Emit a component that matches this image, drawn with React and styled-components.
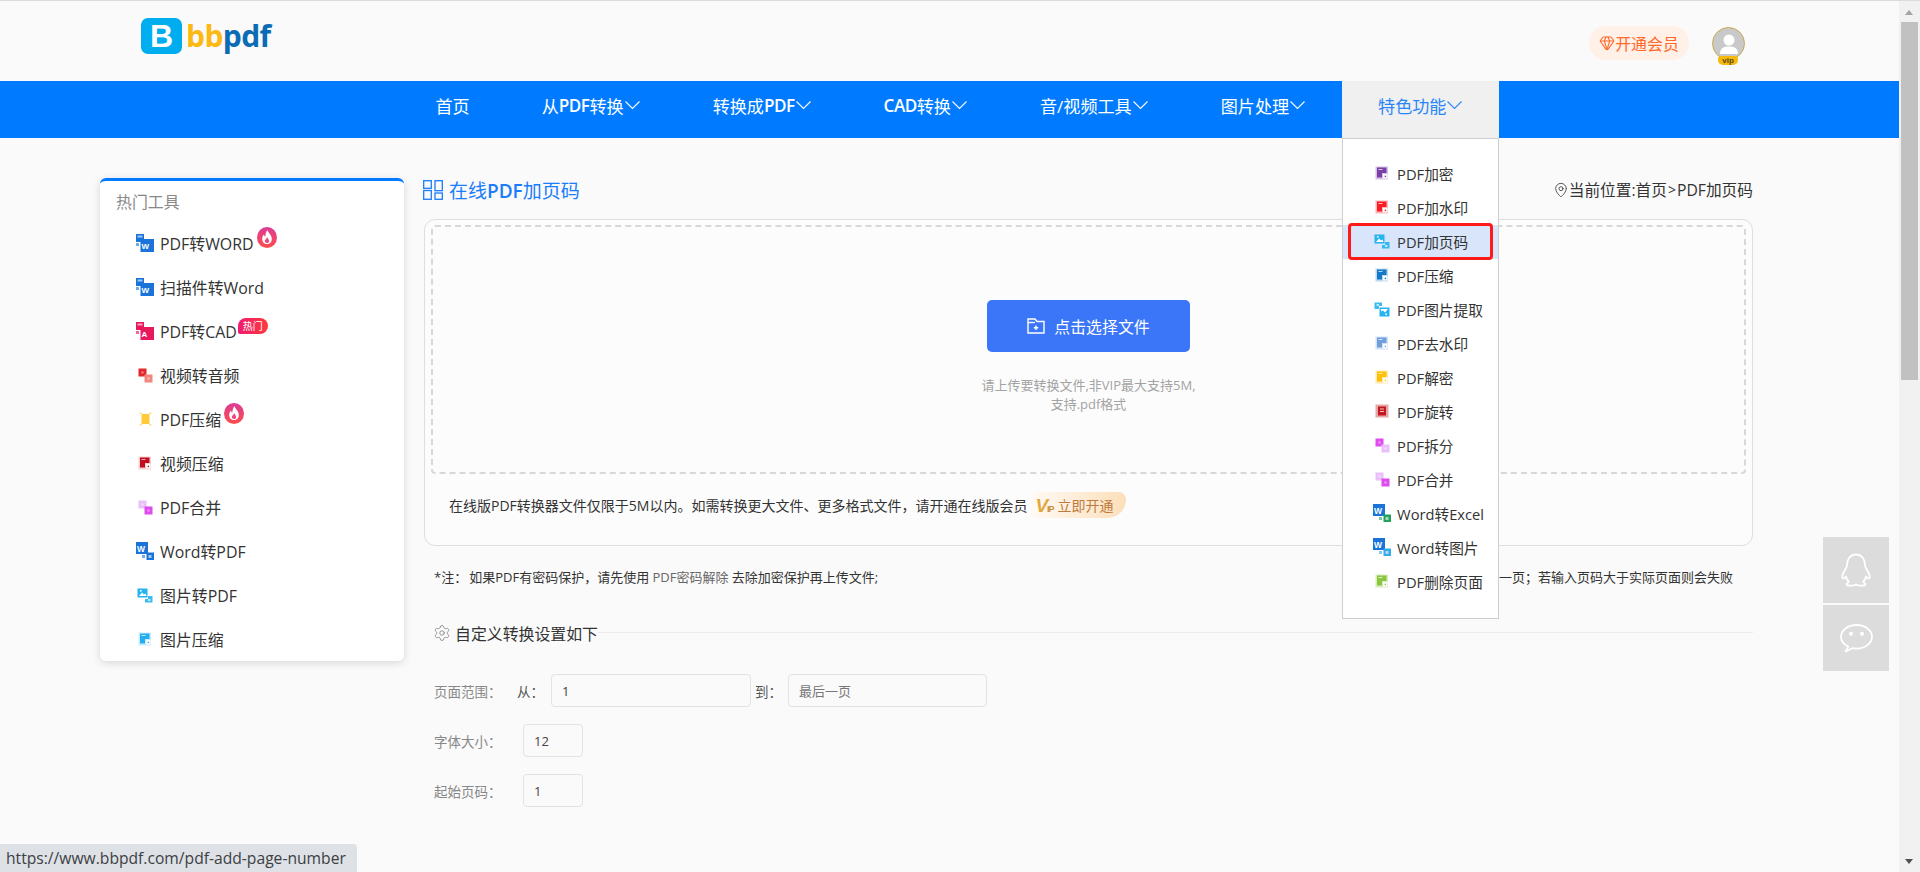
import React from "react";
import styled, { createGlobalStyle } from "styled-components";
import { Gem, MapPin, Settings } from "lucide-react";

const Global = createGlobalStyle`
  html, body { margin: 0; padding: 0; height: 100%; overflow: hidden; background: #fafafa; }
  * { box-sizing: border-box; }
  body { font-family: "Open Sans", "Noto Sans CJK SC", sans-serif; color: #333; }
`;

const Shell = styled.div`
  display: flex;
  width: 1920px;
  height: 872px;
  position: relative;
  overflow: hidden;
  border-top: 1px solid #dcdcdc;
`;
const Page = styled.div`
  flex: 1;
  min-width: 0;
  background: #fafafa;
`;
const Header = styled.header`
  height: 80px;
  display: flex;
  align-items: flex-start;
  justify-content: space-between;
  padding: 17px 154px 0 141px;
`;
const Logo = styled.div`
  display: flex;
  align-items: center;
  gap: 4px;
  height: 36px;
`;
const LogoMark = styled.div`
  width: 41px;
  height: 36px;
  border-radius: 7px;
  background: #00aeef;
  color: #fff;
  display: flex;
  align-items: center;
  justify-content: center;
  font: 700 32px/36px "Liberation Sans", sans-serif;
`;
const LogoWord = styled.div`
  font: 700 30px/36px "Open Sans", sans-serif;
  letter-spacing: -0.6px;
  color: #0b6cb5;
  span { color: #fdb913; }
`;
const HeaderRight = styled.div`
  display: flex;
  align-items: flex-start;
  gap: 23px;
  padding-top: 8px;
`;
const VipPill = styled.div`
  width: 100px;
  height: 34px;
  border-radius: 17px;
  background: #fff0e8;
  color: #ff6a2b;
  font-size: 15.9px;
  display: flex;
  align-items: center;
  justify-content: center;
  svg { flex: none; }
`;
const Avatar = styled.div`
  width: 33px;
  height: 33px;
  border-radius: 50%;
  background: #c9c9c9;
  border: 1.5px solid #c8aa52;
  position: relative;
  margin-top: 1px;
  display: flex;
  align-items: center;
  justify-content: center;
`;
const AvatarBadge = styled.span`
  position: absolute;
  left: 5px;
  top: 28px;
  width: 20px;
  height: 9px;
  border-radius: 3px 3px 5px 5px;
  background: #f6b90d;
  color: #5a4610;
  font: 700 8px/9px "Liberation Sans", sans-serif;
  text-align: center;
`;
const Nav = styled.nav`
  height: 57px;
  background: #007bff;
  display: flex;
  justify-content: center;
`;
const NavItem = styled.div`
  position: relative;
  padding: 0 36px 9px;
  display: flex;
  align-items: center;
  font-size: 17.1px;
  color: ${(p) => (p.$active ? "#2a86f8" : "#fff")};
  background: ${(p) => (p.$active ? "#f0f0f0" : "transparent")};
  b { font-weight: 600; letter-spacing: -0.5px; }
`;
const Menu = styled.div`
  position: absolute;
  left: 0;
  top: 100%;
  width: 157px;
  height: 481px;
  background: #fff;
  border: 1px solid #cfcfcf;
  padding-top: 18px;
  z-index: 5;
`;
const MenuRow = styled.div`
  height: 34px;
  padding-bottom: 2px;
  display: flex;
  align-items: center;
  font-size: 14.7px;
  color: #333;
  background: ${(p) => (p.$selected ? "#d8e5fb" : "transparent")};
  position: relative;
`;
const IconSlot = styled.span`
  width: ${(p) => p.$w}px;
  margin-left: ${(p) => p.$ml}px;
  margin-right: ${(p) => p.$mr}px;
  flex: none;
  display: flex;
  align-items: center;
  justify-content: center;
`;
const Callout = styled.span`
  position: absolute;
  left: 5px;
  right: 5px;
  top: -2px;
  bottom: -1px;
  border: 3px solid #ff1a1a;
  border-radius: 4px;
  pointer-events: none;
`;
const Main = styled.main`
  display: flex;
  align-items: flex-start;
  gap: 20px;
  padding: 40px 146px 0 100px;
`;
const Sidebar = styled.aside`
  width: 304px;
  height: 483px;
  flex: none;
  background: #fff;
  border-top: 3px solid #007bff;
  border-radius: 6px;
  box-shadow: 0 2px 8px rgba(0, 0, 0, 0.14);
  padding: 9px 0 0;
`;
const SideHead = styled.div`
  padding-left: 16px;
  font-size: 15.9px;
  line-height: 24px;
  color: #888;
  margin-bottom: 7px;
`;
const SideRow = styled.div`
  height: 44px;
  display: flex;
  align-items: center;
  font-size: 15.9px;
  color: #333;
`;
const Fire = styled.span`
  align-self: flex-start;
  margin-top: 6px;
  margin-left: 3px;
  display: flex;
`;
const HotTag = styled.span`
  align-self: flex-start;
  margin-top: 9px;
  margin-left: 1px;
  width: 30px;
  height: 16px;
  border-radius: 8px 8px 8px 2px;
  background: linear-gradient(90deg, #ee1c72, #ff3a3a);
  color: #fff;
  font-size: 10px;
  line-height: 16px;
  text-align: center;
`;
const Content = styled.section`
  flex: 1;
  min-width: 0;
`;
const TitleRow = styled.div`
  height: 25px;
  padding-bottom: 2px;
  display: flex;
  align-items: center;
  justify-content: space-between;
  margin-bottom: 16px;
`;
const Title = styled.h1`
  margin: 0;
  display: flex;
  align-items: center;
  gap: 6px;
  margin-left: -1px;
  font-size: 19px;
  font-weight: 400;
  color: #1a7dfb;
  b { font-weight: 600; }
`;
const Crumb = styled.div`
  display: flex;
  align-items: center;
  font-size: 15.7px;
  color: #333;
  i { font-style: normal; margin: 0 1px; font-size: 14px; }
`;
const Card = styled.div`
  height: 327px;
  background: #fcfcfc;
  border: 1px solid #dedede;
  border-radius: 11px;
  padding: 5px 6px 0;
`;
const Drop = styled.div`
  height: 249px;
  border: 2px dashed #d8d8d8;
  border-radius: 4px;
  padding-top: 73px;
  display: flex;
  flex-direction: column;
  align-items: center;
`;
const PickButton = styled.div`
  width: 203px;
  height: 52px;
  background: #3a76f7;
  border-radius: 5px;
  color: #fff;
  font-size: 15.9px;
  display: flex;
  align-items: center;
  justify-content: center;
  gap: 9px;
`;
const Hint = styled.p`
  margin: 24px 0 0;
  text-align: center;
  font-size: 13px;
  line-height: 19px;
  color: #a3a3a3;
`;
const Limit = styled.div`
  display: flex;
  align-items: center;
  height: 26px;
  margin-top: 18px;
  padding-left: 18px;
  font-size: 14px;
  color: #333;
`;
const OpenVip = styled.span`
  margin-left: 4px;
  width: 95px;
  height: 26px;
  display: flex;
  align-items: center;
  padding-left: 4px;
  border-radius: 0 8px 20px 0;
  background: linear-gradient(90deg, #fffaf5, #fddfb9);
  color: #bd7a3c;
  font-size: 14px;
`;
const VipMark = styled.span`
  width: 22px;
  flex: none;
  font: italic 700 19px/1 "Liberation Sans", sans-serif;
  color: #dfa840;
  letter-spacing: -1px;
  small { font-size: 9px; font-style: normal; color: #c98f33; }
`;
const Notes = styled.div`
  display: flex;
  justify-content: space-between;
  margin-top: 22px;
  padding: 0 20px 0 10px;
  font-size: 13px;
  line-height: 18px;
  color: #333;
  em { font-style: normal; color: #666; }
`;
const NoteLead = styled.span`
  margin-right: 2px;
`;
const SectionHead = styled.div`
  display: flex;
  align-items: center;
  gap: 4px;
  margin-top: 34px;
  padding-left: 9px;
  height: 26px;
  font-size: 15.9px;
  color: #333;
`;
const Rule = styled.i`
  flex: 1;
  height: 1px;
  background: #ececec;
  margin: -1px 0 0 -4px;
`;
const Form = styled.div`
  padding: 28px 0 0 10px;
`;
const FormRow = styled.div`
  height: 33px;
  display: flex;
  align-items: center;
  margin-bottom: 17px;
`;
const Label = styled.label`
  width: ${(p) => p.$w}px;
  flex: none;
  padding-left: ${(p) => p.$pl || 0}px;
  font-size: 13.5px;
  color: ${(p) => (p.$dark ? "#555" : "#888")};
`;
const Field = styled.input`
  width: ${(p) => p.$w}px;
  height: 33px;
  flex: none;
  border: 1px solid #e3e3e3;
  border-radius: 4px;
  background: #fafafa;
  padding: 0 10px;
  outline: none;
  font-family: inherit;
  font-size: 13px;
  color: #444;
  &::placeholder { color: #777; opacity: 1; }
`;
const SideDock = styled.div`
  position: absolute;
  left: 1823px;
  top: 536px;
  display: flex;
  flex-direction: column;
  gap: 2px;
  z-index: 6;
`;
const DockBtn = styled.div`
  width: 66px;
  height: 66px;
  background: #dcdcdc;
  display: flex;
  align-items: center;
  justify-content: center;
`;
const Status = styled.div`
  position: absolute;
  left: 0;
  bottom: 0;
  height: 28px;
  width: 357px;
  background: #dee1e6;
  border-radius: 0 4px 0 0;
  padding-left: 6px;
  font: 15.65px/28px "Open Sans", sans-serif;
  color: #3c4043;
  white-space: nowrap;
  z-index: 7;
`;
const Scrollbar = styled.aside`
  width: 21px;
  flex: none;
  background: #f1f1f1;
  position: relative;
  padding-top: 21px;
  display: flex;
  justify-content: center;
`;
const Thumb = styled.div`
  width: 17px;
  height: 358px;
  background: #c1c1c1;
`;
const Arrow = styled.span`
  position: absolute;
  left: 6px;
  ${(p) => (p.$up ? "top: 9px;" : "bottom: 8px;")}
  width: 0;
  height: 0;
  border-left: 4.5px solid transparent;
  border-right: 4.5px solid transparent;
  ${(p) => (p.$up ? "border-bottom: 5px solid #a3a3a3;" : "border-top: 5px solid #505050;")}
`;

const Chevron = ({ color = "#fff" }) => (
  <svg width="17" height="10" viewBox="0 0 17 10" fill="none" stroke={color} strokeWidth="1.1">
    <path d="M1.5 1.5 L8.5 8.5 L15.5 1.5" />
  </svg>
);

/* small document-style tool icons */
const Doc = ({ dark, light }) => (
  <svg width="14" height="14" viewBox="0 0 14 14">
    <rect x="0.5" y="0.5" width="12.5" height="13" fill={light} />
    <path d="M2 1.5 H11.5 V7 H7 V11.5 H2 Z" fill={dark} />
    <rect x="3.5" y="3" width="4" height="1" fill="#fff" opacity=".7" />
    <rect x="8" y="8" width="4.5" height="4.5" fill="#fff" />
    <rect x="9.7" y="9.7" width="1.4" height="1.4" fill={dark} />
  </svg>
);
const Pair = ({ first, second }) => (
  <svg width="15" height="15" viewBox="0 0 15 15">
    <rect x="0.5" y="0.5" width="8" height="8" fill={first} />
    <rect x="6.5" y="6.5" width="8" height="8" fill={second} />
    <rect x="3.5" y="3.5" width="2" height="2" fill="#fff" opacity=".5" />
    <rect x="9.5" y="9.5" width="2" height="2" fill="#fff" opacity=".5" />
  </svg>
);
const Pics = ({ color, flip }) => (
  <svg width="16" height="15" viewBox="0 0 16 15" style={flip ? { transform: "rotate(180deg)" } : undefined}>
    <rect x="0.5" y="0.5" width="10" height="9" fill={color} />
    <path d="M2 8 L5 4.5 L7 6.5 L8.5 5.5 L9.5 8 Z" fill="#fff" />
    <rect x="3" y="2" width="1.6" height="1.6" fill="#fff" />
    <path d="M11 8 H15.5 V14.5 H8 V11 H11 Z" fill={color} opacity=".9" />
    <rect x="11" y="11" width="2.4" height="2" fill="#fff" opacity=".7" />
  </svg>
);
const Compress = () => (
  <svg width="13" height="14" viewBox="0 0 13 14">
    <path d="M2.5 2 H10.5 V12 H2.5 Z" fill="#ffc93c" />
    <path d="M0.5 0.5 H3 V2 H0.5 Z M10 0.5 H12.5 V2 H10 Z M0.5 12 H3 V13.5 H0.5 Z M10 12 H12.5 V13.5 H10 Z" fill="#ffe08a" />
  </svg>
);
const Rotate = () => (
  <svg width="14" height="14" viewBox="0 0 14 14">
    <rect x="0.5" y="0.5" width="13" height="13" fill="#e5a6a6" />
    <rect x="3" y="2.5" width="8" height="9" fill="#c3181f" />
    <rect x="5" y="4.5" width="4" height="1" fill="#f0c4c4" />
    <rect x="5" y="7" width="4" height="1" fill="#f0c4c4" />
  </svg>
);
const WordStack = ({ color = "#1a73d9", back = "#6fa9ea", big, tail }) =>
  big ? (
    <svg width="18" height="18" viewBox="0 0 18 18">
      <rect x="0" y="0" width="12" height="12" fill={color} />
      <text x="1" y="9.5" fontSize="8.5" fontWeight="700" fill="#fff" fontFamily="Liberation Sans">W</text>
      <rect x="10.5" y="10.5" width="7.5" height="7.5" fill={tail} />
      <rect x="6" y="13" width="3" height="3" fill={tail} opacity=".6" />
      <rect x="12.5" y="13" width="3" height="3" fill="#fff" opacity=".6" />
    </svg>
  ) : (
    <svg width="18" height="18" viewBox="0 0 18 18">
      <rect x="0" y="0" width="8" height="8" fill={color} />
      <rect x="1.5" y="1.5" width="5" height="2" fill="#fff" opacity=".6" />
      <rect x="0" y="9" width="3" height="3" fill={back === "cad" ? "#f06a95" : back} />
      <rect x="4.5" y="5" width="13.5" height="13" fill={color} />
      <text x="5.6" y="14.5" fontSize="8" fontWeight="700" fill="#fff" fontFamily="Liberation Sans">
        {back === "cad" ? "A" : "W"}
      </text>
    </svg>
  );
const FireBadge = ({ id }) => (
  <svg width="20" height="21" viewBox="0 0 20 21">
    <defs>
      <linearGradient id={id} x1="0" y1="0" x2="0" y2="1">
        <stop offset="0" stopColor="#dd3a96" />
        <stop offset="1" stopColor="#ff4d4d" />
      </linearGradient>
    </defs>
    <ellipse cx="10" cy="10.5" rx="10" ry="10.5" fill={`url(#${id})`} />
    <path
      d="M10.5 3 C11 6 14.8 7.6 14.8 12 C14.8 15 12.8 17 10 17 C7.2 17 5.2 15 5.2 12 C5.2 10 6 8.6 7 7.6 C7.2 9 7.8 9.6 8.4 9.8 C8.3 7.4 9 5 10.5 3 Z"
      fill="#fff"
    />
    <path d="M10.2 10 C10.6 11.6 12.2 12.4 12.2 14 C12.2 15.4 11.2 16 10 16 C8.8 16 7.8 15.3 7.8 14 C7.8 12.6 9.6 12 10.2 10 Z" fill="#f0487a" />
  </svg>
);

const sideTools = [
  { label: "PDF转WORD", icon: <WordStack />, mark: "fire" },
  { label: "扫描件转Word", icon: <WordStack /> },
  { label: "PDF转CAD", icon: <WordStack color="#e8185f" back="cad" />, mark: "hot" },
  { label: "视频转音频", icon: <Pair first="#e2282e" second="#f2877f" /> },
  { label: "PDF压缩", icon: <Compress />, mark: "fire" },
  { label: "视频压缩", icon: <Doc dark="#c20d1f" light="#f5cfd2" /> },
  { label: "PDF合并", icon: <Pair first="#eac0fb" second="#e04bf0" /> },
  { label: "Word转PDF", icon: <WordStack big tail="#1a73d9" /> },
  { label: "图片转PDF", icon: <Pics color="#25b4f0" /> },
  { label: "图片压缩", icon: <Doc dark="#22aef0" light="#c9ecfb" /> },
];

const menuTools = [
  { label: "PDF加密", icon: <Doc dark="#7b3fa8" light="#d6c3e5" /> },
  { label: "PDF加水印", icon: <Doc dark="#fb1b24" light="#fbb7ba" /> },
  { label: "PDF加页码", icon: <Pics color="#25b4f0" />, selected: true },
  { label: "PDF压缩", icon: <Doc dark="#1478c8" light="#bcd9f1" /> },
  { label: "PDF图片提取", icon: <Pics color="#25b4f0" flip /> },
  { label: "PDF去水印", icon: <Doc dark="#6f9fdc" light="#d3e2f5" /> },
  { label: "PDF解密", icon: <Doc dark="#ffc107" light="#ffeab0" /> },
  { label: "PDF旋转", icon: <Rotate /> },
  { label: "PDF拆分", icon: <Pair first="#e04bf0" second="#eac0fb" /> },
  { label: "PDF合并", icon: <Pair first="#eac0fb" second="#e04bf0" /> },
  { label: "Word转Excel", icon: <WordStack big tail="#22a35a" /> },
  { label: "Word转图片", icon: <WordStack big tail="#35a9ea" /> },
  { label: "PDF删除页面", icon: <Doc dark="#8cc63f" light="#d9edbd" /> },
];

const navItems = [
  ["首页"],
  ["从", "PDF", "转换"],
  ["转换成", "PDF", ""],
  ["", "CAD", "转换"],
  ["音/视频工具"],
  ["图片处理"],
];

export default function App() {
  return (
    <>
      <Global />
      <Shell>
        <Page>
          <Header>
            <Logo>
              <LogoMark>B</LogoMark>
              <LogoWord>
                <span>bb</span>pdf
              </LogoWord>
            </Logo>
            <HeaderRight>
              <VipPill>
                <Gem size={16} strokeWidth={1.6} />
                开通会员
              </VipPill>
              <Avatar>
                <svg width="22" height="24" viewBox="0 0 22 24" fill="#fff">
                  <circle cx="11" cy="8" r="5.5" />
                  <path d="M2 22 C2 16 6 14.5 11 14.5 C16 14.5 20 16 20 22 Z" />
                </svg>
                <AvatarBadge>vip</AvatarBadge>
              </Avatar>
            </HeaderRight>
          </Header>
          <Nav>
            {navItems.map((n, i) => (
              <NavItem key={i}>
                {n.length === 1 ? (
                  n[0]
                ) : (
                  <>
                    {n[0]}
                    <b>{n[1]}</b>
                    {n[2]}
                  </>
                )}
                {i > 0 && <Chevron />}
              </NavItem>
            ))}
            <NavItem $active>
              特色功能
              <Chevron color="#2a86f8" />
              <Menu>
                {menuTools.map((t) => (
                  <MenuRow key={t.label} $selected={t.selected}>
                    <IconSlot $w={18} $ml={30} $mr={6}>
                      {t.icon}
                    </IconSlot>
                    {t.label}
                    {t.selected && <Callout />}
                  </MenuRow>
                ))}
              </Menu>
            </NavItem>
          </Nav>
          <Main>
            <Sidebar>
              <SideHead>热门工具</SideHead>
              {sideTools.map((t) => (
                <SideRow key={t.label}>
                  <IconSlot $w={18} $ml={36} $mr={6}>
                    {t.icon}
                  </IconSlot>
                  {t.label}
                  {t.mark === "fire" && (
                    <Fire>
                      <FireBadge id={`fire-${t.label}`} />
                    </Fire>
                  )}
                  {t.mark === "hot" && <HotTag>热门</HotTag>}
                </SideRow>
              ))}
            </Sidebar>
            <Content>
              <TitleRow>
                <Title>
                  <svg width="20" height="20" viewBox="0 0 20 20" fill="none" stroke="#1a7dfb" strokeWidth="1.3">
                    <rect x="0.7" y="0.7" width="7.6" height="7.6" />
                    <rect x="12" y="0.7" width="7.3" height="10" />
                    <rect x="0.7" y="10.5" width="7.6" height="8.8" />
                    <rect x="12" y="13" width="7.3" height="6.3" />
                  </svg>
                  <span>
                    在线<b>PDF</b>加页码
                  </span>
                </Title>
                <Crumb>
                  <MapPin size={16} strokeWidth={1.2} />
                  当前位置:首页<i>&gt;</i>PDF加页码
                </Crumb>
              </TitleRow>
              <Card>
                <Drop>
                  <PickButton>
                    <svg width="18" height="16" viewBox="0 0 18 16" fill="none" stroke="#fff" strokeWidth="1.4">
                      <path d="M1 1 H8 L10 3.5 H17 V15 H1 Z" />
                      <path d="M1 4.5 H8" />
                      <path d="M9 7.5 V12 M6.8 9.8 H11.2" />
                    </svg>
                    点击选择文件
                  </PickButton>
                  <Hint>
                    请上传要转换文件,非VIP最大支持5M,
                    <br />
                    支持.pdf格式
                  </Hint>
                </Drop>
                <Limit>
                  在线版PDF转换器文件仅限于5M以内。如需转换更大文件、更多格式文件，请开通在线版会员
                  <OpenVip>
                    <VipMark>
                      V<small>IP</small>
                    </VipMark>
                    立即开通
                  </OpenVip>
                </Limit>
              </Card>
              <Notes>
                <span>
                  <NoteLead>*注：</NoteLead>如果PDF有密码保护，请先使用 <em>PDF密码解除</em> 去除加密保护再上传文件;
                </span>
                <span>一页；若输入页码大于实际页面则会失败</span>
              </Notes>
              <SectionHead>
                <Settings size={18} strokeWidth={1} color="#777" />
                自定义转换设置如下
                <Rule />
              </SectionHead>
              <Form>
                <FormRow>
                  <Label $w={83}>页面范围：</Label>
                  <Label $w={34} $dark>
                    从：
                  </Label>
                  <Field $w={200} defaultValue="1" />
                  <Label $w={37} $pl={4} $dark>
                    到：
                  </Label>
                  <Field $w={199} placeholder="最后一页" />
                </FormRow>
                <FormRow>
                  <Label $w={89}>字体大小：</Label>
                  <Field $w={60} defaultValue="12" />
                </FormRow>
                <FormRow>
                  <Label $w={89}>起始页码：</Label>
                  <Field $w={60} defaultValue="1" />
                </FormRow>
              </Form>
            </Content>
          </Main>
        </Page>
        <Scrollbar>
          <Arrow $up />
          <Thumb />
          <Arrow />
        </Scrollbar>
        <SideDock>
          <DockBtn>
            <svg width="32" height="34" viewBox="0 0 32 34" fill="none" stroke="#fff" strokeWidth="1.8" strokeLinejoin="round">
              <path d="M16 1.5 C10 1.5 7 6.5 7 12 C7 14 6 15 5 17 C3 20 1.7 23 2.7 25 C3.7 26 5 25 6 23.5 C6.5 26 8 28 9 29 C7 30 6 31 7 32 C8 33 14 33 16 31.5 C18 33 24 33 25 32 C26 31 25 30 23 29 C24 28 25.5 26 26 23.5 C27 25 28.3 26 29.3 25 C30.3 23 29 20 27 17 C26 15 25 14 25 12 C25 6.5 22 1.5 16 1.5 Z" />
            </svg>
          </DockBtn>
          <DockBtn>
            <svg width="33" height="29" viewBox="0 0 33 29" fill="none">
              <path
                d="M16.5 1 C8 1 1 6.3 1 12.8 C1 17 4 20.6 8.3 22.6 L5.6 27.5 L12.4 24.2 C13.7 24.5 15.1 24.6 16.5 24.6 C25 24.6 32 19.3 32 12.8 C32 6.3 25 1 16.5 1 Z"
                stroke="#fff"
                strokeWidth="1.8"
                strokeLinejoin="round"
              />
              <circle cx="11" cy="9.8" r="2" fill="#fff" />
              <circle cx="22" cy="9.8" r="2" fill="#fff" />
            </svg>
          </DockBtn>
        </SideDock>
        <Status>https://www.bbpdf.com/pdf-add-page-number</Status>
      </Shell>
    </>
  );
}
